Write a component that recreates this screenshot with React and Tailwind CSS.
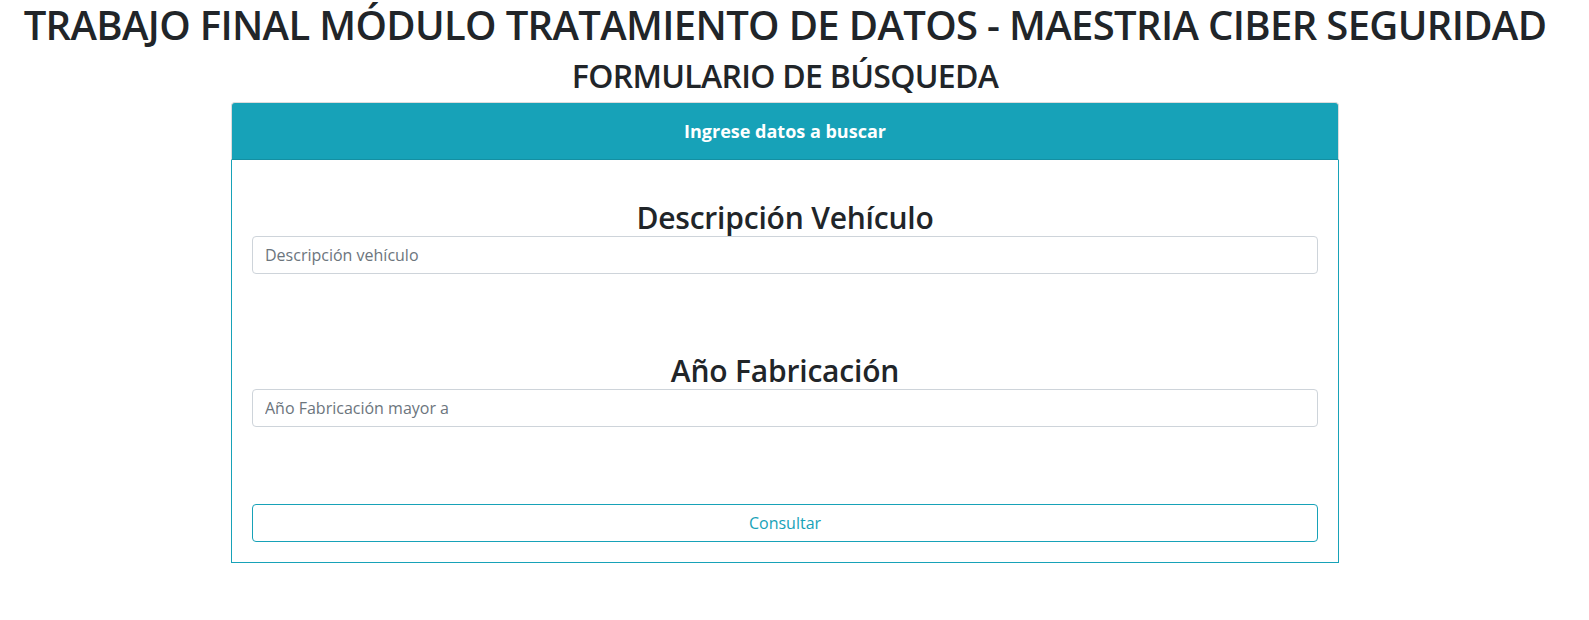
import React from 'react';

const font = { fontFamily: '"Open Sans", "Noto Sans", sans-serif' };

const Campo = ({ titulo, placeholder, className }) => (
  <div className={className}>
    <h2 className="text-center text-[30px] leading-[1.2] font-semibold tracking-[-0.2px] text-[#212529]">{titulo}</h2>
    <input
      type="text"
      placeholder={placeholder}
      className="block w-full h-[38px] px-3 text-base text-[#495057] placeholder-[#6c757d] border border-[#ced4da] rounded-[4px] bg-white outline-none"
    />
  </div>
);

const App = () => {
  return (
    <div className="w-[1570px] bg-white min-h-[620px] pt-[1px]" style={font}>
      <h1 className="text-center text-[40px] leading-[48px] font-semibold tracking-[-0.65px] text-[#212529] whitespace-nowrap">
        TRABAJO FINAL MÓDULO TRATAMIENTO DE DATOS - MAESTRIA CIBER SEGURIDAD
      </h1>
      <h2 className="mt-[8px] text-center text-[32px] leading-[1.2] font-semibold tracking-[-0.7px] text-[#212529]">
        FORMULARIO DE BÚSQUEDA
      </h2>

      <div className="w-[1108px] mx-auto mt-[7px]">
        <div className="h-[58px] flex items-center justify-center bg-[#17a2b8] border border-[#dcdcdc] border-b-[#148fa2] rounded-t-[4px]">
          <span className="text-white font-bold text-[18px]">Ingrese datos a buscar</span>
        </div>
        <div className="border border-t-0 border-[#17a2b8] px-5 pt-[40px] pb-5">
          <Campo titulo="Descripción Vehículo" placeholder="Descripción vehículo" />
          <Campo titulo="Año Fabricación" placeholder="Año Fabricación mayor a" className="mt-[79px]" />
          <button className="mt-[77px] w-full h-[38px] border border-[#17a2b8] rounded-[4px] text-[#17a2b8] text-base bg-white">
            Consultar
          </button>
        </div>
      </div>
    </div>
  );
};

export default App;
